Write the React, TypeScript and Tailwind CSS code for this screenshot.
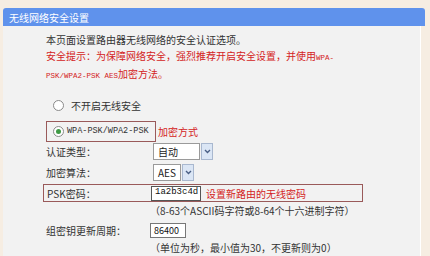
import React from "react"

const cjk = { fontFamily: "'Noto Sans CJK SC', 'Noto Sans', sans-serif" }
const mono = { fontFamily: "'Liberation Mono', 'Noto Sans CJK SC', monospace" }

function Radio({ checked }: { checked?: boolean }) {
  return (
    <span className="flex h-[11px] w-[11px] items-center justify-center rounded-full border border-[#8a8a8a] bg-white">
      {checked && <span className="h-[5px] w-[5px] rounded-full bg-[#3f9a45]" />}
    </span>
  )
}

function Select({ value, width }: { value: string; width: string }) {
  return (
    <div className="flex h-[17px] items-stretch gap-[1px]">
      <div className={`${width} flex items-center border border-[#9a9a9a] bg-white pl-[4px] text-[10px] text-[#222]`}>
        {value}
      </div>
      <div className="flex w-[12px] items-center justify-center border border-[#a9b8cf] bg-[#dbe6f5]">
        <svg width="7" height="5" viewBox="0 0 7 5">
          <path d="M1 1 L3.5 3.5 L6 1" fill="none" stroke="#4a5f85" strokeWidth="1.4" />
        </svg>
      </div>
    </div>
  )
}

export default function App() {
  return (
    <div className="h-[256px] w-[430px] overflow-hidden bg-[#f6ede2] pt-[8px]" style={cjk}>
      <div className="ml-[3px] w-[422px]">
        <div className="flex h-[18px] items-center rounded-t-[3px] bg-[#5f92ec] pl-[6px] text-[10px] text-white">
          无线网络安全设置
        </div>

        <div className="mr-[4px] h-[240px] border-r border-white bg-[#f2f2f2] pl-[43px] pt-[6px] text-[10px] text-[#333]">
          <div className="leading-[16px]">本页面设置路由器无线网络的安全认证选项。</div>
          <div className="leading-[16px] text-[#d42323]">
            安全提示：为保障网络安全，强烈推荐开启安全设置，并使用
            <span className="text-[7.5px]" style={mono}>WPA-</span>
          </div>
          <div className="leading-[16px] text-[#d42323]">
            <span className="text-[7.5px]" style={mono}>PSK/WPA2-PSK AES</span>加密方法。
          </div>

          <div className="mt-[11px] flex h-[20px] items-center gap-[7px] pl-[7px]">
            <Radio />
            <span>不开启无线安全</span>
          </div>

          <div className="mt-[6px] flex items-center">
            <div className="flex h-[21px] w-[110px] items-center gap-[3px] border border-[#9a5a5a] pl-[6px]">
              <Radio checked />
              <span className="text-[8.5px] text-[#333]" style={mono}>WPA-PSK/WPA2-PSK</span>
            </div>
            <span className="ml-[2px] text-[#d42323]">加密方式</span>
          </div>

          <div className="grid grid-cols-[107px_1fr] items-center">
            <div className="flex h-[18px] items-center">认证类型：</div>
            <Select value="自动" width="w-[47px]" />
          </div>

          <div className="mt-[3px] grid grid-cols-[107px_1fr] items-center">
            <div className="flex h-[18px] items-center">加密算法：</div>
            <Select value="AES" width="w-[28px]" />
          </div>

          <div className="mt-[3px] -ml-[3px] flex h-[18px] w-[320px] items-center border border-[#9a5a5a] pl-[3px]">
            <span className="w-[104px]">PSK密码：</span>
            <div className="flex h-[15px] w-[50px] items-center border border-[#555] bg-white pl-[3px] text-[9px] text-[#111]" style={mono}>
              1a2b3c4d
            </div>
            <span className="ml-[5px] text-[#d42323]">设置新路由的无线密码</span>
          </div>

          <div className="ml-[104px] flex h-[17px] items-center">（8-63个ASCII码字符或8-64个十六进制字符）</div>

          <div className="mt-[3px] grid grid-cols-[104px_1fr] items-center">
            <div className="flex h-[17px] items-center">组密钥更新周期：</div>
            <div className="flex h-[15px] w-[36px] items-center border border-[#777] bg-white pl-[3px] text-[9px] text-[#111]" style={cjk}>
              86400
            </div>
          </div>

          <div className="ml-[104px] flex h-[17px] items-center">（单位为秒，最小值为30，不更新则为0）</div>
        </div>
      </div>
    </div>
  )
}
